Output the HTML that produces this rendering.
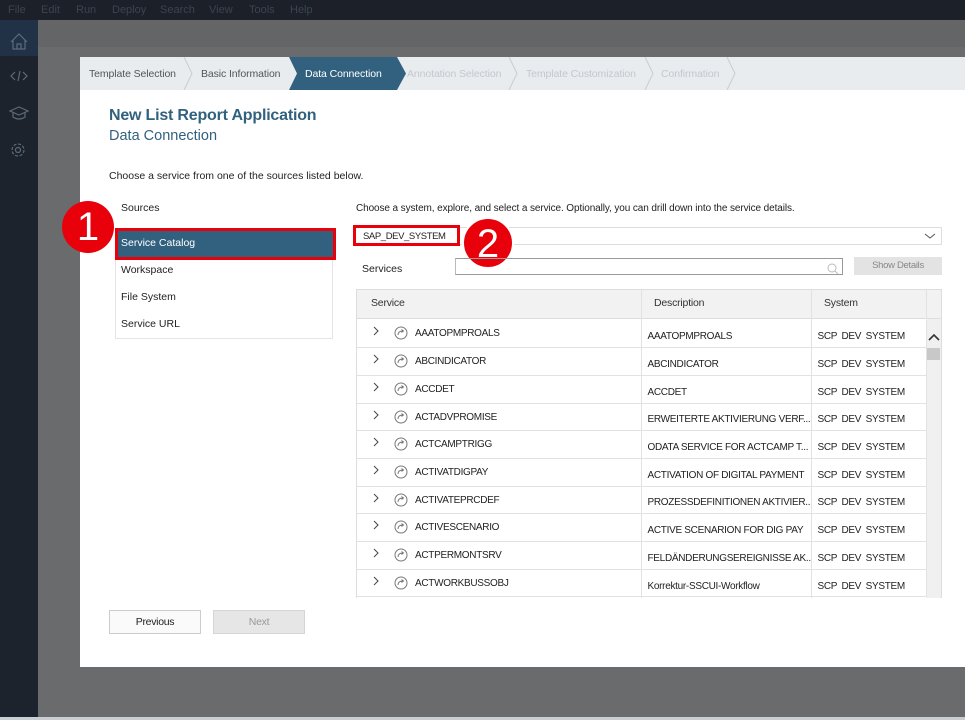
<!DOCTYPE html>
<html><head><meta charset="utf-8"><style>
*{margin:0;padding:0;box-sizing:border-box}
body{width:965px;height:720px;overflow:hidden;background:#6a6b6d;font-family:"Liberation Sans",sans-serif;position:relative}
.abs{position:absolute}
#menu{left:0;top:0;width:965px;height:20px;background:#1b2029;color:#3c4450;font-size:11px}
#menu span{position:absolute;top:4px}
#side{left:0;top:20px;width:38px;height:700px;background:#1d232c}
#topband{left:38px;top:20px;width:927px;height:27px;background:#646567}
#panel{left:80px;top:57px;width:885px;height:610px;background:#fff}
#wiz{left:80px;top:57px;width:885px;height:33px;background:#e8ecef;font-size:10.5px;letter-spacing:-0.1px}
.st{position:absolute;top:11px;color:#555}
.dis{color:#c3c8cd}
.sep{position:absolute;top:0}
.t{font-size:11px;color:#222}
table{border-collapse:collapse;font-size:10px;color:#222;table-layout:fixed;letter-spacing:-0.3px}
td{border-bottom:1px solid #e2e2e2;border-right:1px solid #e2e2e2;height:27.7px;vertical-align:middle;white-space:nowrap;overflow:hidden}
#bottom{left:0;top:717px;width:965px;height:3px;background:#c9ced2}
</style></head><body>
<div id="menu" class="abs"><span style="left:8px">File</span><span style="left:41px">Edit</span><span style="left:76px">Run</span><span style="left:112px">Deploy</span><span style="left:160px">Search</span><span style="left:209px">View</span><span style="left:249px">Tools</span><span style="left:290px">Help</span></div>
<div id="side" class="abs">
<div class="abs" style="left:0;top:0;width:38px;height:36px;background:#213247"></div>
<svg class="abs" style="left:0;top:0" width="38" height="150" fill="none" stroke="#5d6a7a" stroke-width="1.2">
<path d="M11 22 L19 14 L27 22 M13 20 V29 H25 V20 M17 29 V24 H21 V29"/>
<path d="M15 52 L11 56 L15 60 M23 52 L27 56 L23 60 M20 51 L18 61"/>
<path d="M10 91 L19 87 L28 91 L19 95 Z M13 93 V97 Q19 101 25 97 V93"/>
<circle cx="18" cy="130" r="2.5"/><circle cx="18" cy="130" r="6" stroke-dasharray="3 1.7"/>
</svg></div>
<div id="topband" class="abs"></div>
<div id="panel" class="abs"></div>
<div id="wiz" class="abs">
<span class="st" style="left:9px">Template Selection</span>
<svg class="sep" style="left:103px" width="12" height="33"><path d="M1 0 L9 16.5 L1 33" stroke="#c8cdd2" fill="none"/></svg>
<span class="st" style="left:121px">Basic Information</span>
<svg class="abs" style="left:209px;top:0" width="118" height="33"><path d="M0 0 H108 L117 16.5 L108 33 H0 L8 16.5 Z" fill="#32617f"/></svg>
<span class="st" style="left:225px;color:#fff">Data Connection</span>
<span class="st dis" style="left:327px">Annotation Selection</span>
<svg class="sep" style="left:428px" width="12" height="33"><path d="M1 0 L9 16.5 L1 33" stroke="#c8cdd2" fill="none"/></svg>
<span class="st dis" style="left:446px">Template Customization</span>
<svg class="sep" style="left:564px" width="12" height="33"><path d="M1 0 L9 16.5 L1 33" stroke="#c8cdd2" fill="none"/></svg>
<span class="st dis" style="left:581px">Confirmation</span>
<svg class="sep" style="left:646px" width="12" height="33"><path d="M1 0 L9 16.5 L1 33" stroke="#c8cdd2" fill="none"/></svg>
</div>
<div class="abs" style="left:109px;top:107px;font-size:16px;letter-spacing:-0.2px;font-weight:bold;color:#32617f">New List Report Application</div>
<div class="abs" style="left:109px;top:128px;font-size:14.5px;color:#32617f">Data Connection</div>
<div class="abs t" style="left:109px;top:170px;font-size:10.5px">Choose a service from one of the sources listed below.</div>
<div class="abs t" style="left:121px;top:202px;font-size:10.5px">Sources</div>
<div class="abs" style="left:115px;top:229px;width:218px;height:110px;border:1px solid #e4e4e4"></div>
<div class="abs" style="left:115px;top:228px;width:221px;height:32px;border:3px solid #e8000b;background:#32617f"></div>
<div class="abs t" style="left:121px;top:237px;color:#fff;font-size:10.5px">Service Catalog</div>
<div class="abs t" style="left:121px;top:264px;font-size:10.5px">Workspace</div>
<div class="abs t" style="left:121px;top:291px;font-size:10.5px">File System</div>
<div class="abs t" style="left:121px;top:318px;font-size:10.5px">Service URL</div>
<div class="abs" style="left:62px;top:201px;width:52px;height:52px;border-radius:50%;background:#e8000b;color:#fff;font-size:40px;text-align:center;line-height:52px">1</div>
<div class="abs t" style="left:356px;top:203px;font-size:10px;letter-spacing:-0.1px">Choose a system, explore, and select a service. Optionally, you can drill down into the service details.</div>
<div class="abs" style="left:356px;top:227px;width:586px;height:18px;border:1px solid #ddd"></div>
<div class="abs" style="left:353px;top:225px;width:107px;height:21px;border:3px solid #e8000b;background:#fff"></div>
<div class="abs" style="left:363px;top:231px;font-size:9.5px;letter-spacing:-0.4px;color:#222">SAP_DEV_SYSTEM</div>
<svg class="abs" style="left:924px;top:232px" width="12" height="8"><path d="M1 2 L6 6 L11 2" stroke="#555" fill="none"/></svg>
<div class="abs" style="left:462px;top:217px;width:52px;height:52px;border-radius:50%;background:#e8000b;color:#fff;font-size:40px;text-align:center;line-height:50px;border:2px solid #fff">2</div>
<div class="abs t" style="left:362px;top:263px;font-size:10.5px">Services</div>
<div class="abs" style="left:455px;top:258px;width:388px;height:17px;border:1px solid #999;border-left-color:#bbb"></div>
<svg class="abs" style="left:826px;top:262px" width="14" height="13"><circle cx="6" cy="6" r="4" stroke="#bbb" fill="none"/><path d="M9 9 L12 12" stroke="#bbb"/></svg>
<div class="abs" style="left:854px;top:257px;width:88px;height:18px;background:#e3e3e3;color:#888;font-size:9.5px;letter-spacing:-0.3px;text-align:center;line-height:18px">Show Details</div>
<div class="abs" style="left:356px;top:289px;width:586px;height:309px;border:1px solid #ddd;border-bottom:none;overflow:hidden">
<div class="abs" style="left:0;top:0;width:586px;height:29px;background:#f2f2f2;border-bottom:1px solid #ddd"></div>
<div class="abs" style="left:284px;top:0;width:1px;height:309px;background:#e2e2e2"></div>
<div class="abs" style="left:454px;top:0;width:1px;height:309px;background:#e2e2e2"></div>
<div class="abs" style="left:569px;top:0;width:1px;height:29px;background:#e2e2e2"></div>
<div class="abs" style="left:569px;top:29px;width:16px;height:280px;background:#f0f0f0"></div>
<svg class="abs" style="left:571px;top:44px" width="12" height="8"><path d="M1 6 L6 1 L11 6" stroke="#333" stroke-width="1.6" fill="none"/></svg>
<div class="abs" style="left:570px;top:58px;width:13px;height:12px;background:#c8c8c8"></div>
<div class="abs" style="left:14px;top:7px;font-size:10.5px;letter-spacing:-0.2px;color:#333">Service</div>
<div class="abs" style="left:297px;top:7px;font-size:10.5px;letter-spacing:-0.2px;color:#333">Description</div>
<div class="abs" style="left:467px;top:7px;font-size:10.5px;letter-spacing:-0.2px;color:#333">System</div>
<table class="abs" style="left:0;top:30px;width:569px">
<colgroup><col style="width:284px"><col style="width:170px"><col style="width:115px"></colgroup>
<tbody id="tb"></tbody></table>
</div>
<div class="abs" style="left:109px;top:610px;width:92px;height:24px;border:1px solid #ccc;background:#fafafa;font-size:10.5px;letter-spacing:-0.3px;text-align:center;line-height:22px;color:#222">Previous</div>
<div class="abs" style="left:213px;top:610px;width:92px;height:24px;border:1px solid #d5d5d5;background:#e6e6e6;font-size:10.5px;letter-spacing:-0.3px;text-align:center;line-height:22px;color:#999">Next</div>
<div id="bottom" class="abs"></div>
<script>
var r=[["AAATOPMPROALS","AAATOPMPROALS"],["ABCINDICATOR","ABCINDICATOR"],["ACCDET","ACCDET"],["ACTADVPROMISE","ERWEITERTE AKTIVIERUNG VERF..."],["ACTCAMPTRIGG","ODATA SERVICE FOR ACTCAMP T..."],["ACTIVATDIGPAY","ACTIVATION OF DIGITAL PAYMENT"],["ACTIVATEPRCDEF","PROZESSDEFINITIONEN AKTIVIER..."],["ACTIVESCENARIO","ACTIVE SCENARION FOR DIG PAY"],["ACTPERMONTSRV","FELDÄNDERUNGSEREIGNISSE AK..."],["ACTWORKBUSSOBJ","Korrektur-SSCUI-Workflow"]];
var h="";r.forEach(function(x){h+='<tr><td style="position:relative"><svg style="position:absolute;left:16px;top:5px" width="40" height="16"><path d="M1 2 L5 6 L1 10" stroke="#444" fill="none"/><circle cx="28" cy="8" r="6" stroke="#777" fill="none"/><path d="M25 10 Q25 6 30 6 M28.5 4.5 L30.5 6 L28.5 7.5" stroke="#777" fill="none"/></svg><span style="position:absolute;left:58px;top:8px">'+x[0]+'</span></td><td style="padding:6px 0 0 6px">'+x[1]+'</td><td style="padding:6px 0 0 6px;word-spacing:2px">SCP DEV SYSTEM</td></tr>';});
document.getElementById("tb").innerHTML=h;
</script>
</body></html>
